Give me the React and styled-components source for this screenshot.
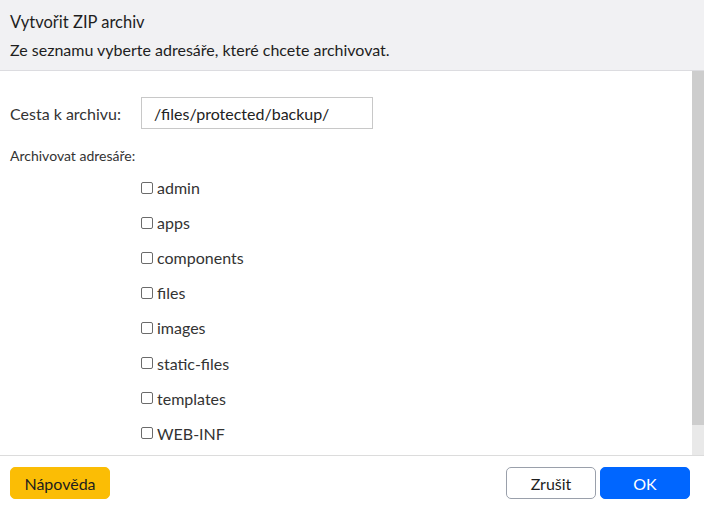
import React from "react";
import styled, { createGlobalStyle } from "styled-components";

const Global = createGlobalStyle`
  html, body { margin: 0; padding: 0; }
  body { font-family: Lato, "Open Sans", sans-serif; color: #222; background: #fff; }
  * { box-sizing: border-box; }
`;

const Dialog = styled.div`
  width: 704px;
  height: 510px;
  display: flex;
  flex-direction: column;
  background: #fff;
`;

const Header = styled.div`
  height: 71px;
  flex: none;
  background: #f1f1f3;
  border-bottom: 1px solid #dcdce0;
  padding: 12px 10px 0;
`;

const Title = styled.div`
  font-size: 16.5px;
  line-height: 20px;
  color: #1e1e1e;
`;

const Subtitle = styled.div`
  font-size: 16px;
  line-height: 20px;
  margin-top: 8px;
  color: #1e1e1e;
`;

const ScrollArea = styled.div`
  flex: 1;
  min-height: 0;
  display: flex;
`;

const Body = styled.div`
  flex: 1;
  min-width: 0;
  overflow: hidden;
  padding: 26px 0 0 10px;
`;

const ScrollTrack = styled.div`
  width: 12px;
  flex: none;
  display: flex;
  flex-direction: column;
  background: #e9e9e9;
`;

const ScrollThumb = styled.div`
  height: 354px;
  background: #cdcdcd;
`;

const FieldRow = styled.div`
  display: grid;
  grid-template-columns: 131px 232px;
  align-items: center;
`;

const Label = styled.label`
  font-size: 16px;
  color: #333;
`;

const Input = styled.div`
  height: 32px;
  border: 1px solid #c8c8c8;
  padding: 0 12px;
  display: flex;
  align-items: center;
  font-size: 16px;
  color: #222;
`;

const SectionLabel = styled.div`
  margin-top: 18px;
  font-size: 14px;
  line-height: 18px;
  color: #333;
`;

const List = styled.div`
  margin-top: 5px;
  padding-left: 131px;
  display: flex;
  flex-direction: column;
`;

const Item = styled.label`
  height: 35.1px;
  flex: none;
  display: flex;
  align-items: center;
  gap: 4px;
  font-size: 16px;
  color: #333;
`;

const Box = styled.span`
  width: 12px;
  height: 12px;
  border: 1px solid #6b6b6b;
  border-radius: 2px;
  background: #fff;
  flex: none;
`;

const Footer = styled.div`
  height: 55px;
  flex: none;
  border-top: 1px solid #dcdcdc;
  display: flex;
  align-items: flex-start;
  padding: 11px 14px 0 10px;
  gap: 4px;
`;

const Button = styled.button`
  height: 32px;
  width: ${(p) => p.$w}px;
  border-radius: 5px;
  font-family: Lato, "Open Sans", sans-serif;
  font-size: 16px;
  cursor: pointer;
  border: 1px solid ${(p) => p.$border};
  background: ${(p) => p.$bg};
  color: ${(p) => p.$color};
  margin-left: ${(p) => (p.$push ? "auto" : "0")};
`;

const dirs = ["admin", "apps", "components", "files", "images", "static-files", "templates", "WEB-INF"];

export default function App() {
  return (
    <>
      <Global />
      <Dialog>
        <Header>
          <Title>Vytvořit ZIP archiv</Title>
          <Subtitle>Ze seznamu vyberte adresáře, které chcete archivovat.</Subtitle>
        </Header>
        <ScrollArea>
          <Body>
            <FieldRow>
              <Label>Cesta k archivu:</Label>
              <Input>/files/protected/backup/</Input>
            </FieldRow>
            <SectionLabel>Archivovat adresáře:</SectionLabel>
            <List>
              {dirs.map((d) => (
                <Item key={d}>
                  <Box />
                  {d}
                </Item>
              ))}
            </List>
          </Body>
          <ScrollTrack>
            <ScrollThumb />
          </ScrollTrack>
        </ScrollArea>
        <Footer>
          <Button $w={100} $bg="#fbbd05" $border="#fbbd05" $color="#1e1e1e">Nápověda</Button>
          <Button $w={90} $bg="#fff" $border="#9aa0ab" $color="#1e1e1e" $push>Zrušit</Button>
          <Button $w={90} $bg="#0066ff" $border="#0066ff" $color="#fff">OK</Button>
        </Footer>
      </Dialog>
    </>
  );
}
